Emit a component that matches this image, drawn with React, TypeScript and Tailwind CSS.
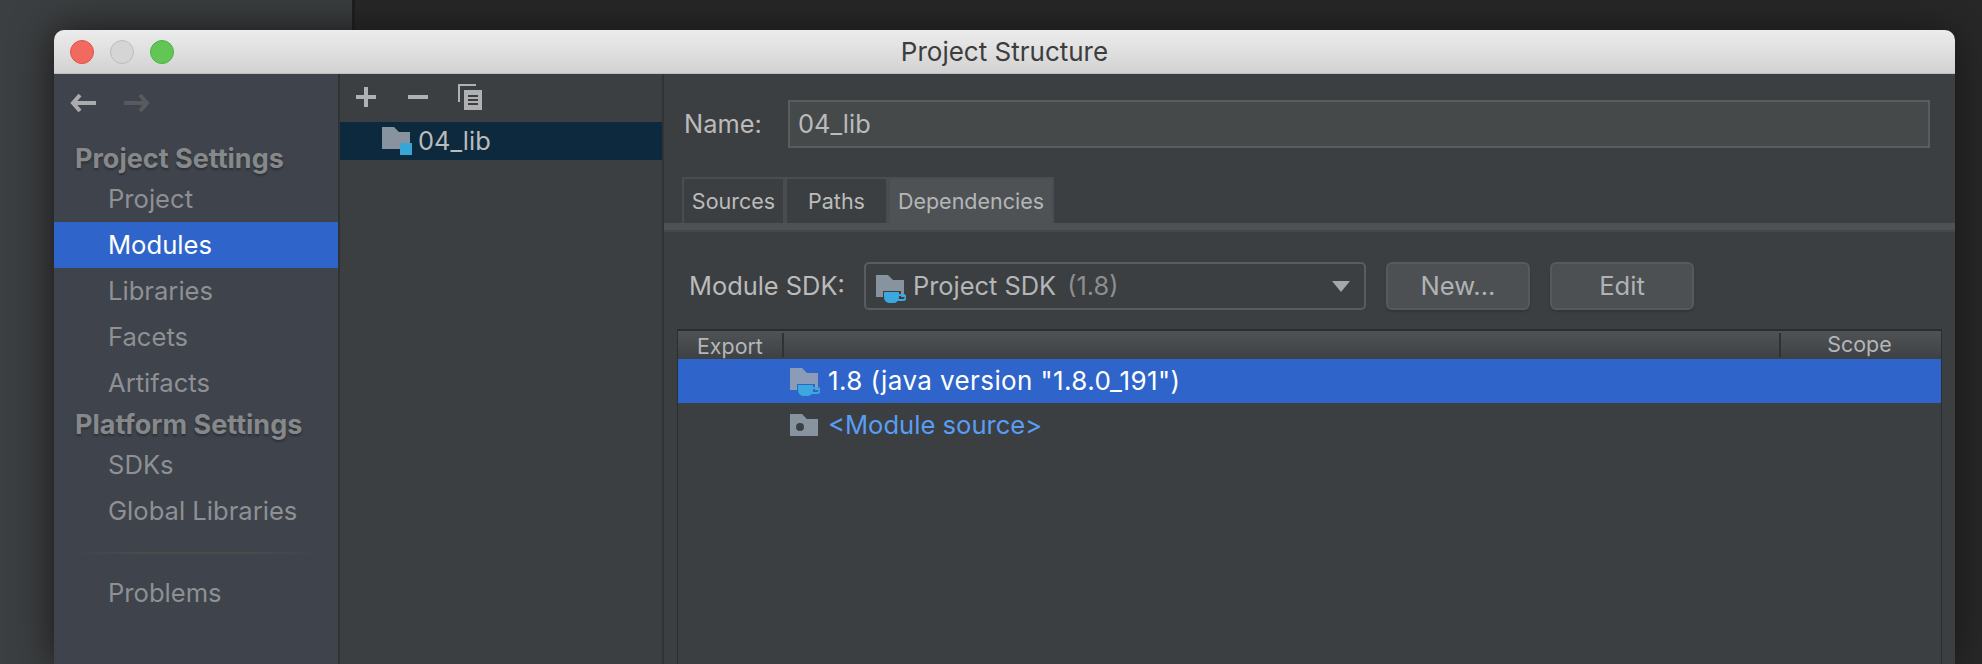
import React from 'react';

const sans = 'font-["Inter","Liberation_Sans",sans-serif]';

const FolderShape = ({ fill = '#87939e' }: { fill?: string }) => (
  <path d="M0 0h12l5 5h11v17H0z" fill={fill} />
);

const ModuleFolder = () => (
  <svg width="30" height="28" viewBox="0 0 30 28" className="shrink-0">
    <FolderShape />
    <rect x="18" y="16" width="12" height="12" fill="#37a6d6" />
  </svg>
);

const SdkFolder = ({ fill = '#87939e', gap }: { fill?: string; gap: string }) => (
  <svg width="30" height="30" viewBox="0 0 30 30" className="shrink-0">
    <FolderShape fill={fill} />
    <path d="M7 16h18v14H7z" fill={gap} />
    <path d="M8 17h15v5c0 4-3 6-6 6h-3c-3 0-6-2-6-6z" fill="#3ba8de" />
    <path d="M23 20h4a2 2 0 0 1 0 5h-5" fill="none" stroke="#3ba8de" strokeWidth="2" />
  </svg>
);

const SourceFolder = () => (
  <svg width="28" height="22" viewBox="0 0 28 22" className="shrink-0">
    <FolderShape />
    <circle cx="10" cy="13" r="4" fill="#3c3f41" />
  </svg>
);

const BackArrow = ({ color, flip }: { color: string; flip?: boolean }) => (
  <svg width="26" height="20" viewBox="0 0 26 20" className={flip ? 'rotate-180' : ''}>
    <path d="M10 2 3 10l7 8M3 10h23" fill="none" stroke={color} strokeWidth="4" />
  </svg>
);

const NavItem = ({ label, active }: { label: string; active?: boolean }) => (
  <div
    className={`h-[46px] flex items-center pl-[54px] text-[25.6px] ${
      active ? 'bg-[#2f65ca] text-white' : 'text-[#8e9093]'
    }`}
  >
    {label}
  </div>
);

const NavHeading = ({ label }: { label: string }) => (
  <div className="h-[36px] flex items-center pl-[21px] pt-[2px] text-[27px] font-bold text-[#86888a] [text-shadow:0_2px_2px_#2e3136]">
    {label}
  </div>
);

const Tab = ({ label, active }: { label: string; active?: boolean }) => (
  <div
    className={`flex items-center justify-center border-[2px] border-b-0 border-[#4a4d4f] text-[21.5px] ${
      active ? 'w-[166px] bg-[#4e5254] text-[#b4b6b8] h-[47px] -mb-px' : 'w-[103px] h-[46px] text-[#bbbbbb]'
    }`}
  >
    {label}
  </div>
);

const Button = ({ label }: { label: string }) => (
  <div className="w-[144px] h-[48px] flex items-center justify-center rounded-[6px] border-[2px] border-[#565a5c] bg-[#4c5052] text-[25.6px] text-[#b0b2b4] shadow-[0_2px_2px_#34373a]">
    {label}
  </div>
);

const Sidebar = () => (
  <div className="w-[286px] shrink-0 flex flex-col bg-[#3e434c] border-r-[2px] border-[#303234]">
    <div className="h-[66px] flex gap-[28px] pl-[16px] pt-[19px] items-start">
      <BackArrow color="#a9abae" />
      <BackArrow color="#585a5d" flip />
    </div>
    <NavHeading label="Project Settings" />
    <NavItem label="Project" />
    <NavItem label="Modules" active />
    <NavItem label="Libraries" />
    <NavItem label="Facets" />
    <NavItem label="Artifacts" />
    <NavHeading label="Platform Settings" />
    <NavItem label="SDKs" />
    <NavItem label="Global Libraries" />
    <div className="mt-[18px] mb-[16px] mx-[14px] h-[2px] bg-[linear-gradient(90deg,#3e434c,#4c4c4c_30%,#4c4c4c_70%,#3e434c)]" />
    <NavItem label="Problems" />
  </div>
);

const ModuleList = () => (
  <div className="w-[324px] shrink-0 flex flex-col bg-[#3c3f41] border-r-[2px] border-[#303234]">
    <div className="h-[48px] flex items-center pl-[16px] gap-[32px]">
      <svg width="20" height="20" viewBox="0 0 20 20" className="mt-[-2px]">
        <path d="M8 0h4v8h8v4h-8v8H8v-8H0V8h8z" fill="#afb1b3" />
      </svg>
      <svg width="20" height="4" viewBox="0 0 20 4" className="mt-[-2px]">
        <rect width="20" height="4" fill="#afb1b3" />
      </svg>
      <svg width="24" height="26" viewBox="0 0 24 26" className="ml-[-2px] mt-[-3px]">
        <path d="M0 0h18v2H2v16H0z" fill="#afb1b3" />
        <path d="M6 6h18v20H6z" fill="#afb1b3" />
        <path d="M10 11h10v2H10zM10 15h10v2H10zM10 19h10v2H10z" fill="#3c3f41" />
      </svg>
    </div>
    <div className="h-[38px] bg-[#0d293e] flex items-center pl-[42px] gap-[6px] text-[25.4px] text-[#bbbbbb]">
      <ModuleFolder />
      <span>04_lib</span>
    </div>
  </div>
);

const DependencyTable = () => (
  <div className="mx-[13px] mt-[19px] flex-1 flex flex-col border-x border-t-[2px] border-[#2b2d2e]">
    <div className="h-[28px] flex items-stretch bg-[linear-gradient(#505356,#3e4143)] text-[21.4px] text-[#b4b6b8] leading-[26px]">
      <div className="w-[106px] pl-[19px] border-r-[2px] border-[#2f3133] my-[2px]">Export</div>
      <div className="flex-1 border-r-[2px] border-[#2f3133] my-[2px]" />
      <div className="w-[160px] pr-[3px] text-center">Scope</div>
    </div>
    <div className="h-[44px] bg-[#2f65ca] flex items-start pl-[112px] pt-[9px] gap-[8px] text-white">
      <SdkFolder fill="#8b9cb8" gap="#2f65ca" />
      <span className="text-[26px] tracking-[0.4px] leading-[26px]">1.8 (java version "1.8.0_191")</span>
    </div>
    <div className="h-[44px] flex items-center pl-[112px] gap-[10px] text-[25.6px] text-[#589df6]">
      <SourceFolder />
      <span>&lt;Module source&gt;</span>
    </div>
  </div>
);

const ModuleDetail = () => (
  <div className="flex-1 min-w-0 flex flex-col bg-[#3c3f41]">
    <div className="mt-[26px] pl-[20px] pr-[25px] flex items-center">
      <span className="w-[104px] text-[25.4px] text-[#bbbbbb]">Name:</span>
      <div className="flex-1 h-[48px] flex items-center pl-[8px] border-[2px] border-[#5a5d5f] bg-[#45494a] text-[25.4px] text-[#bbbbbb]">
        04_lib
      </div>
    </div>
    <div className="mt-[29px] pl-[18px] flex">
      <Tab label="Sources" />
      <Tab label="Paths" />
      <Tab label="Dependencies" active />
    </div>
    <div className="h-[9px] bg-[#4e5254] border-b-[2px] border-[#45484a]" />
    <div className="mt-[30px] pl-[25px] flex items-center">
      <span className="w-[175px] text-[25.4px] text-[#bbbbbb]">Module SDK:</span>
      <div className="w-[502px] h-[48px] flex items-center pl-[10px] pr-[14px] rounded-[5px] border-[2px] border-[#5a5d5f] text-[25.4px] text-[#b4b6b8]">
        <div className="mt-[8px] h-[30px] flex"><SdkFolder gap="#3c3f41" /></div>
        <span className="ml-[7px]">Project SDK</span>
        <span className="ml-[11px] text-[#8c8e90]">(1.8)</span>
        <svg width="18" height="11" viewBox="0 0 18 11" className="ml-auto">
          <path d="M0 0h18L9 11z" fill="#a5a7a9" />
        </svg>
      </div>
      <div className="ml-[20px]"><Button label="New..." /></div>
      <div className="ml-[20px]"><Button label="Edit" /></div>
    </div>
    <DependencyTable />
  </div>
);

export default function App() {
  return (
    <div
      className={`${sans} w-[1982px] h-[664px] overflow-hidden pl-[54px] pt-[30px] bg-[linear-gradient(90deg,#3c3f41_0,#3c3f41_352px,#1f1f1f_352px,#1f1f1f_355px,#282828_355px)]`}
    >
      <div className="w-[1901px] h-[634px] flex flex-col rounded-t-[10px] overflow-hidden shadow-[0_0_40px_#161616]">
        <div className="relative h-[44px] shrink-0 flex items-center justify-center bg-[linear-gradient(#ececec,#d2d2d2)] border-b border-[#bdbdbd] text-[26px] text-[#3d3d3d]">
          <div className="absolute left-[16px] top-[10px] flex gap-[16px]">
            <div className="w-[24px] h-[24px] rounded-full bg-[#f2695f] border border-[#e0524a]" />
            <div className="w-[24px] h-[24px] rounded-full bg-[#d5d5d5] border border-[#bcbcbc]" />
            <div className="w-[24px] h-[24px] rounded-full bg-[#62c655] border border-[#50b045]" />
          </div>
          Project Structure
        </div>
        <div className="flex-1 min-h-0 flex">
          <Sidebar />
          <ModuleList />
          <ModuleDetail />
        </div>
      </div>
    </div>
  );
}
